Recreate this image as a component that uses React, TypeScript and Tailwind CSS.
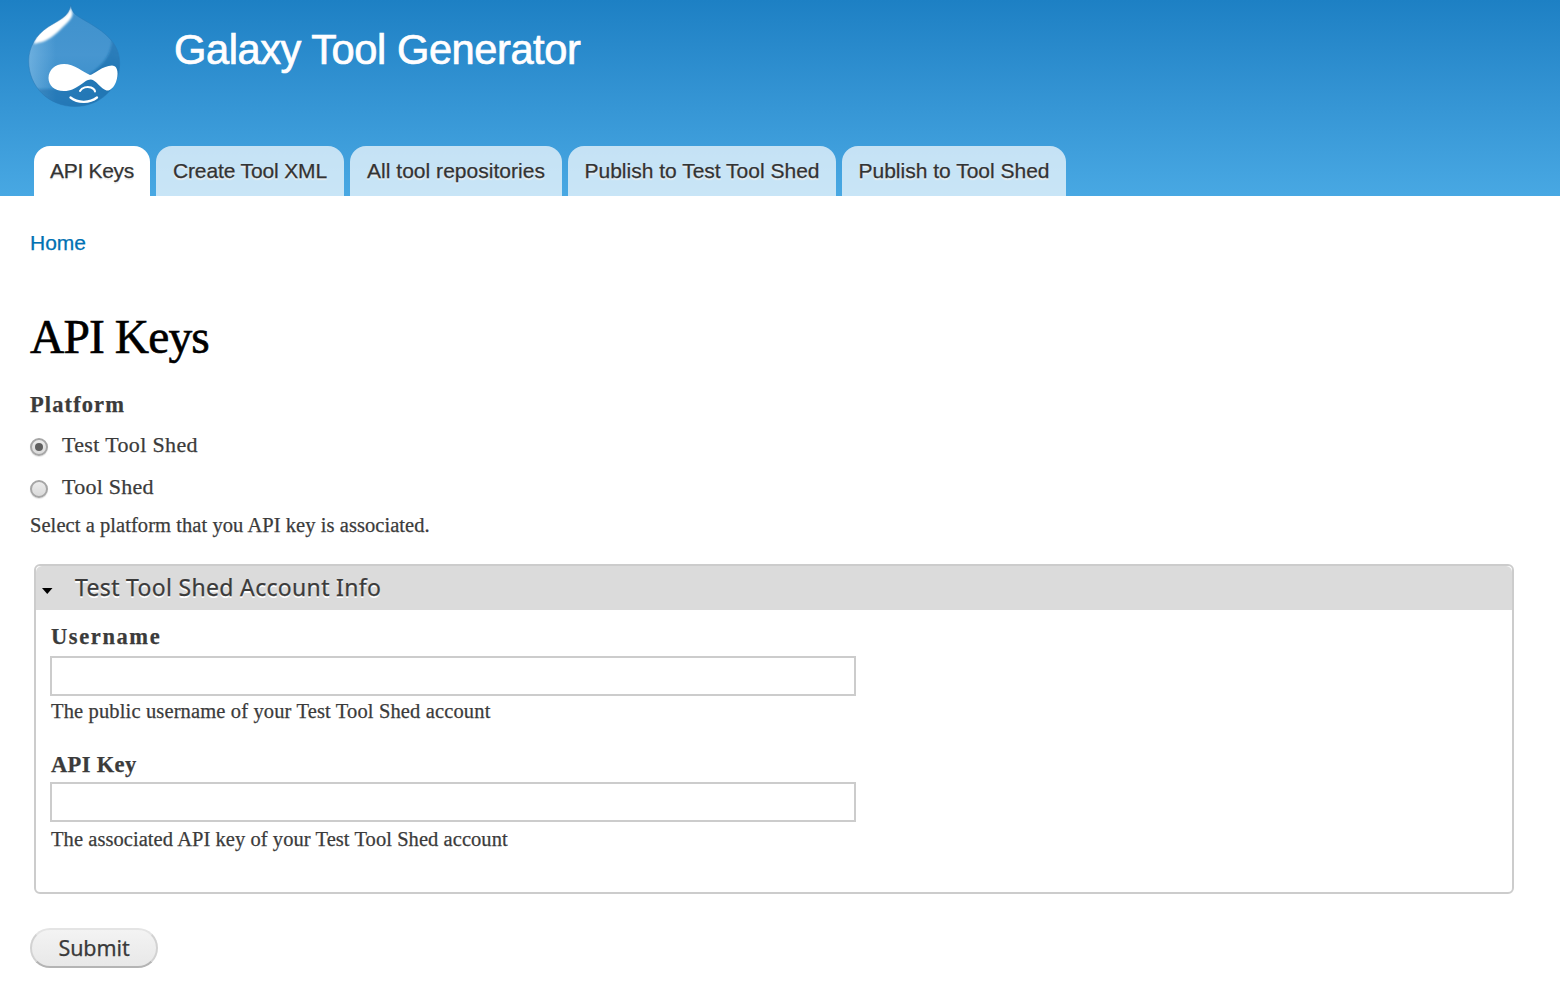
import React from "react";

const sans = "font-['Liberation_Sans',Arial,sans-serif]";
const serif = "font-['Liberation_Serif',Georgia,serif]";
const lucida = "font-['Noto_Sans','Open_Sans',sans-serif]";

const tabs = [
  { label: "API Keys", box: "w-[116px] bg-white", text: "tracking-[-0.3px]" },
  { label: "Create Tool XML", box: "w-[188px] bg-white/70", text: "tracking-[-0.13px]" },
  { label: "All tool repositories", box: "w-[212px] bg-white/70", text: "tracking-[0.03px]" },
  { label: "Publish to Test Tool Shed", box: "w-[268px] bg-white/70", text: "" },
  { label: "Publish to Tool Shed", box: "w-[224px] bg-white/70", text: "" },
];

const dropPath =
  "M43.700 2C45 8 47 11 52 14C66 23 92.700 34 92.700 60C92.700 86 72 103.500 48 103.500C22 103.500 1.700 84 1.700 58C1.700 44 9 32 21 24C31 17.500 42 14 43.700 2Z";

function Logo() {
  return (
    <svg className="block h-[104px] w-[96px]" viewBox="0 0 96 104">
      <defs>
        <linearGradient id="body" x1="0" y1="0" x2="0" y2="1">
          <stop offset="0" stopColor="#3d90cc" />
          <stop offset="0.5" stopColor="#4796d0" />
          <stop offset="0.8" stopColor="#3c8fcb" />
          <stop offset="1" stopColor="#2a82c0" />
        </linearGradient>
        <linearGradient id="edge" x1="0" y1="0" x2="1" y2="0">
          <stop offset="0" stopColor="#8fc6ec" stopOpacity="0.55" />
          <stop offset="0.3" stopColor="#8fc6ec" stopOpacity="0" />
        </linearGradient>
        <linearGradient id="shade" x1="0.9" y1="0" x2="0.4" y2="1">
          <stop offset="0" stopColor="#1769a8" stopOpacity="0.5" />
          <stop offset="0.5" stopColor="#1769a8" stopOpacity="0.7" />
          <stop offset="1" stopColor="#1769a8" stopOpacity="0.4" />
        </linearGradient>
        <clipPath id="drop">
          <path d={dropPath} />
        </clipPath>
        <filter id="soft" x="-20%" y="-20%" width="140%" height="140%">
          <feGaussianBlur stdDeviation="0.9" />
        </filter>
      </defs>
      <g clipPath="url(#drop)">
        <rect width="96" height="104" fill="url(#body)" />
        <rect width="96" height="104" fill="url(#edge)" />
        <path d="M85 36C84 56 72 64 62 72C56 78 50 86 40 86H0V104H96V36Z" fill="url(#shade)" filter="url(#soft)" />
        <path
          d="M7 41C7 32 17 25 24 21C34 15 42 13 43 3L45 8C47 13 43 17 38 22C31 29 24 36 15 39C11 40 9 40 7 41Z"
          fill="#fff"
          filter="url(#soft)"
        />
      </g>
      <path d={dropPath} fill="none" stroke="#2676b4" strokeWidth="0.8" opacity="0.6" />
      <g transform="translate(0 1)">
        <path
          d="M37 60C47 60 57 68.500 63 71C67 70.500 76 61.500 85 61.500C91.500 61.500 91.500 71 89 78C86.500 84 83 87 79.500 86.500C74 85 69 76 64 75.500C57 75 51 87 37 87C27 87 21.500 81 21.500 74C21.500 66 28 60 37 60Z"
          fill="#fff"
        />
        <path d="M53 87C55 83.500 60 82 64 83.500C66.500 84.500 68 85.500 68 87.500" fill="none" stroke="#fff" strokeWidth="2" strokeLinecap="round" />
        <path d="M43.500 93.500C51 99.500 63 99 70 93.500" fill="none" stroke="#fff" strokeWidth="2.300" strokeLinecap="round" />
      </g>
    </svg>
  );
}

function Radio({ label, checked, tracking }: { label: string; checked?: boolean; tracking: string }) {
  return (
    <label className="flex h-[42px] items-center">
      <span className="mt-1 flex size-[18px] items-center justify-center rounded-full border-2 border-[#a6a6a6] bg-linear-to-b from-[#ececec] to-[#dadada] shadow-[0_1px_1px_rgba(0,0,0,0.12)]">
        {checked && <span className="size-2 rounded-full bg-[#5f5f5f]" />}
      </span>
      <span className={`ml-[14px] text-[22px] leading-[42px] ${tracking}`}>{label}</span>
    </label>
  );
}

function Field({ label, hint, labelStyle, hintStyle }: { label: string; hint: string; labelStyle: string; hintStyle: string }) {
  return (
    <div>
      <label className={`block pl-px text-[22.5px] font-bold ${labelStyle}`}>{label}</label>
      <input type="text" className="block h-10 w-[806px] border-2 border-[#cccccc] bg-white px-1 outline-none" />
      <p className={`pl-px text-[20.5px] leading-6 ${hintStyle}`}>{hint}</p>
    </div>
  );
}

export default function App() {
  return (
    <div className={`h-[986px] w-full overflow-hidden bg-white text-[#3b3b3b] [-webkit-text-stroke:0.25px] ${serif}`}>
      <header className={`flex h-[196px] flex-col justify-between bg-linear-to-b from-[#1d80c4] to-[#48a8e3] ${sans}`}>
        <div className="flex pl-[27px] pt-[3px]">
          <Logo />
          <h1 className="mt-[23px] ml-[51px] text-[41.6px] leading-[48px] tracking-[-0.43px] text-[#fffeff] [-webkit-text-stroke:0.7px]">Galaxy Tool Generator</h1>
        </div>
        <nav className="flex gap-1.5 pl-[34px]">
          {tabs.map((t) => (
            <a key={t.label} className={`flex h-[50px] justify-center rounded-t-2xl text-[21px] leading-[50px] whitespace-nowrap text-[#333333] [text-shadow:0_2px_1px_#eeeeee] ${t.box}`}>
              <span className={t.text}>{t.label}</span>
            </a>
          ))}
        </nav>
      </header>

      <main className="px-[30px]">
        <a className={`mt-[35px] block text-[21px] leading-6 text-[#0071b3] ${sans}`}>Home</a>
        <h2 className="mt-[54px] text-[47.5px] leading-[56px] tracking-[-0.9px] text-black [-webkit-text-stroke:0.6px]">API Keys</h2>

        <div className="mt-[27px] text-[22.5px] leading-[26px] font-bold tracking-[1.1px]">Platform</div>
        <div className="mt-[6px]">
          <Radio label="Test Tool Shed" checked tracking="tracking-[0.35px]" />
          <Radio label="Tool Shed" tracking="tracking-[0.25px]" />
        </div>
        <p className="mt-[5px] text-[20.5px] leading-6 tracking-[0.06px]">Select a platform that you API key is associated.</p>

        <fieldset className="mt-[27px] ml-1 h-[330px] w-[1480px] overflow-hidden rounded-md border-2 border-[#cccccc]">
          <div className={`flex h-11 items-center bg-[#dbdbdb] pl-[6px] ${lucida}`}>
            <svg className="mt-[5px] h-[6px] w-[11px]" viewBox="0 0 11 6">
              <path d="M0 0H10.500L5.250 6Z" fill="#000" />
            </svg>
            <span className="-mt-0.5 ml-[22px] text-[23px] leading-[44px] tracking-[0.32px] [text-shadow:0_2px_0_#ffffff]">Test Tool Shed Account Info</span>
          </div>
          <div className="pl-[14px]">
            <Field label="Username" hint="The public username of your Test Tool Shed account" labelStyle="pt-[11px] pb-[3px] leading-8 tracking-[1.6px]" hintStyle="mt-[3px] tracking-[0.14px]" />
            <div className="mt-[26px]">
              <Field label="API Key" hint="The associated API key of your Test Tool Shed account" labelStyle="pb-px leading-8 tracking-[0.35px]" hintStyle="mt-[5px] tracking-[0.06px]" />
            </div>
          </div>
        </fieldset>

        <button className={`mt-[34px] flex h-10 w-32 items-center justify-center rounded-full border-2 border-t-[#e4e4e4] border-r-[#d2d2d2] border-b-[#b4b4b4] border-l-[#d2d2d2] bg-linear-to-b from-[#f3f3f3] to-[#e8e8e8] text-[21.5px] leading-9 tracking-[-0.1px] text-[#3a3a3a] ${lucida}`}>
          Submit
        </button>
      </main>
    </div>
  );
}
